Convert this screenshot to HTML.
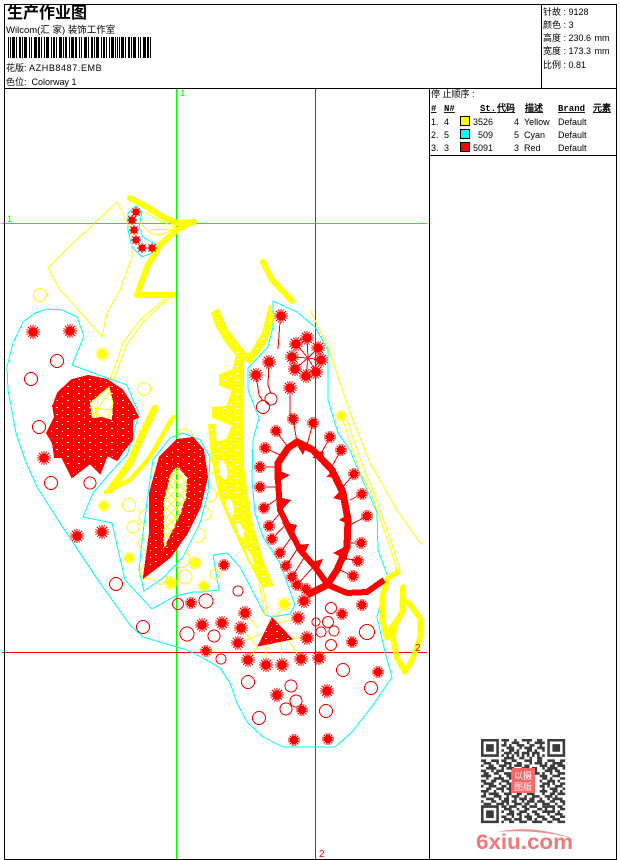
<!DOCTYPE html>
<html><head><meta charset="utf-8"><title>生产作业图</title>
<style>
html,body{margin:0;padding:0;background:#fff;width:620px;height:860px;overflow:hidden}
svg{position:absolute;left:0;top:0;display:block}
text{font-family:"Liberation Sans","WenQuanYi Zen Hei","Noto Sans CJK SC",sans-serif;font-size:9px;fill:#000}
.m{font-family:"Liberation Mono","WenQuanYi Zen Hei",monospace;font-weight:bold;text-decoration:underline}
.c{fill:none;stroke:#0ff;stroke-width:1}
.y{fill:none;stroke:#ff0;stroke-width:1}
.yt{fill:none;stroke:#ff0;stroke-linejoin:round;stroke-linecap:round}
.r{fill:none;stroke:#f00;stroke-width:1}
.o circle{fill:none;stroke:#f00;stroke-width:1}
.oy circle{fill:none;stroke:#ff0;stroke-width:1}
</style></head><body>
<svg width="620" height="860" viewBox="0 0 620 860" shape-rendering="crispEdges">
<defs>
<g id="s" stroke="currentColor" fill="currentColor" stroke-width="1"><circle r="4"/><path d="M-7 0H7M0-7V7M-5-5L5 5M-5 5L5-5M-6.5-2.5L6.5 2.5M-6.5 2.5L6.5-2.5M-2.5-6.5L2.5 6.5M2.5-6.5L-2.5 6.5"/></g>
<g id="t" stroke="currentColor" fill="currentColor" stroke-width="1"><circle r="3.4"/><path d="M-6 0H6M0-6V6M-4.3-4.3L4.3 4.3M-4.3 4.3L4.3-4.3M-5.6-2.2L5.6 2.2M-5.6 2.2L5.6-2.2M-2.2-5.6L2.2 5.6M2.2-5.6L-2.2 5.6"/></g>
<g id="u" stroke="currentColor" fill="currentColor" stroke-width="1"><circle r="3"/><path d="M-5 0H5M0-5V5M-3.6-3.6L3.6 3.6M-3.6 3.6L3.6-3.6"/></g>
<pattern id="rp" width="11" height="7" patternUnits="userSpaceOnUse"><rect width="11" height="7" fill="#f00"/><rect x="1" y="1" width="2" height="1" fill="#fff"/><rect x="7" y="4" width="1" height="1" fill="#fff"/></pattern>
<pattern id="yp" width="13" height="7" patternUnits="userSpaceOnUse"><rect width="13" height="7" fill="#ff0"/><rect x="2" y="2" width="3" height="1" fill="#fff"/><rect x="9" y="5" width="2" height="1" fill="#fff"/></pattern>
<pattern id="lat" width="9" height="9" patternUnits="userSpaceOnUse"><path d="M0 0L9 9M9 0L0 9" stroke="#ff0" stroke-width="1" fill="none"/></pattern>
</defs>

<!-- guide lines -->
<path d="M2 223.5H427" stroke="#0f0" stroke-width="1"/>
<rect x="176" y="88" width="1.6" height="771" fill="#0f0"/>
<path d="M315.5 88V859" stroke="#f00" stroke-width="1"/>
<path d="M2 652.5H427" stroke="#f00" stroke-width="1"/>

<!-- cyan outlines -->
<polygon class="c" points="72,365 84,336 77,317 62,310 47,309 35,313 23,322 13,343 7,367 8,390 10,400 16,433 25,460 37,487 60,523 80,553 100,583 130,625 143,637 163,643 187,650 203,658 220,668 230,683 237,703 247,722 263,737 283,747 335,747 352,732 373,705 392,677 385,652 377,617 388,577 378,550 377,512 367,490 358,470 350,450 338,433 328,400 328,350 315,327 297,312 273,301 273,327 268,347 248,368 248,390 259,418 253,440 252,480 255,513 263,537 280,563 295,605 290,614 272,617 265,615 240,567 227,553 213,555 219,590 200,592 193,592 175,596 152,609 125,580 112,523 83,517 93,493 110,473 127,455 132,440 139,413 133,400 127,385 107,378"/>
<polygon class="c" points="136,206 142,212 139,227 143,237 157,245 152,253 142,257 132,247 128,230 128,213"/>
<polygon class="c" points="144,591 139,570 143,533 149,487 153,460 170,438 183,433 200,440 210,457 208,493 200,523 183,557 163,578"/>

<!-- yellow thin -->
<polygon class="y" points="117,202 95,223 73,243 48,268 60,290 83,315 102,337 107,313 120,290 132,257 131,230"/>
<path class="y" d="M167 297L140 320L123 343L110 380M171 296L143 322L126 346L113 382"/>
<path class="y" d="M145 212Q160 222 176 227M140 222Q155 245 176 226M150 230Q165 228 176 232"/>
<path class="y" d="M310 310L328 347L340 383L353 420L370 463L380 480L397 510L413 533L422 545"/>
<path class="y" d="M347 420L363 467L373 490L393 547L400 570M343 420L360 473L370 490L390 547L397 570"/>
<path class="y" d="M262 583L268 615M259 583L265 615"/>
<path class="y" d="M272 618L290 604M258 628L245 613M262 634L238 643M256 645L241 628M272 625L298 618M285 638L307 638M258 646L248 660M266 640V665M281 640L282 665M288 640L301 659"/>
<path class="y" d="M150 470a6 6 0 0 1 0 12M146 510a7 7 0 0 0 0 14M146 536a7 7 0 0 0 0 14M144 564a7 7 0 0 0 8 14M207 460a6 6 0 0 1 2 14M211 488a6 6 0 0 1-3 14M206 508a6 6 0 0 1-2 12M200 528a7 7 0 0 1-4 14M186 552a7 7 0 0 1-10 14M166 576a6 6 0 0 1-12 4M178 436a6 6 0 0 1 14 0"/>

<!-- yellow thick -->
<path class="yt" stroke-width="6" d="M130 198L147 207L163 217L177 223L194 222"/>
<path class="yt" stroke-width="6" d="M192 222L177 230L160 245L147 267L137 295L173 295"/>
<path class="yt" stroke-width="6" d="M263 262L272 280L292 301"/>
<path class="yt" stroke-width="7" d="M155 408L143 433L130 463L110 490"/>
<path class="yt" stroke-width="4.5" d="M173 417L150 457L130 480L106 492"/>
<polygon fill="url(#yp)" stroke="#ff0" stroke-width="2" points="212,313 218,310 227,330 245,353 250,355 263,333 270,305 273,320 265,343 250,363 243,358 243,377 242,417 243,467 250,517 262,560 272,585 263,587 247,557 233,527 220,497 212,457 209,425 214,425 216,443 227,440 233,425 213,417 213,408 227,407 233,390 220,385 220,375 233,370 237,355 227,343 217,327"/>
<g fill="#fff"><ellipse cx="223" cy="470" rx="4" ry="10" transform="rotate(-12 223 470)"/><ellipse cx="230" cy="507" rx="3.5" ry="9" transform="rotate(-15 230 507)"/><ellipse cx="240" cy="530" rx="3" ry="8" transform="rotate(-20 240 530)"/><ellipse cx="250" cy="557" rx="1.5" ry="9" transform="rotate(-25 250 557)"/></g>
<path class="yt" stroke-width="5.5" d="M398 572L388 578L382 598L382 618L387 638L392 627L402 613L403 587"/>
<path class="yt" stroke-width="5.5" d="M408 602L420 618L420 638L413 658L405 672L397 658L393 638L395 625L402 613"/>

<!-- yellow circles / stars -->
<g class="oy"><circle cx="40" cy="295" r="6.5"/><circle cx="144" cy="389" r="6.5"/><circle cx="129" cy="505" r="6.5"/><circle cx="133" cy="527" r="6"/><circle cx="185" cy="577" r="7"/><circle cx="215" cy="574" r="5"/></g>
<g color="#ff0"><use href="#s" x="102" y="354"/><use href="#t" x="104" y="506"/><use href="#t" x="129" y="558"/><use href="#s" x="195" y="563"/><use href="#s" x="171" y="583"/><use href="#t" x="204" y="586"/><use href="#t" x="341" y="416"/><use href="#s" x="284" y="604"/></g>

<!-- red fan -->
<polygon fill="url(#rp)" stroke="#f00" stroke-width="2" points="53,407 58,393 72,380 88,376 107,380 122,390 133,407 138,417 132,420 132,440 122,452 117,460 107,455 100,473 90,463 72,477 62,457 55,457 53,443 47,433 55,417 53,405"/>
<polygon fill="#fff" points="90,403 109,387 113,403 112,420 102,417 92,418"/>
<path class="y" d="M90 403L109 387L113 403L108 418M98 396L96 418M90 408L112 410M92 418L109 392M90 412L103 417"/>

<!-- red leaf -->
<path fill="url(#rp)" stroke="#f00" stroke-width="2" fill-rule="evenodd" d="M144 577L150 533L150 493L160 457L177 440L193 438L203 450L207 477L200 507L187 533L170 557ZM177 465L170 473L163 500L163 552L180 517L187 497L188 477Z"/>
<polygon fill="url(#lat)" points="177,465 170,473 163,500 163,552 180,517 187,497 188,477"/>

<!-- ring -->
<path d="M278 480L278 463L288 448L297 442L313 450L332 470L343 493L348 520L347 547L337 570L327 585L307 595" fill="none" stroke="#f00" stroke-width="7"/>
<path d="M278 480L280 510L290 530L300 550L315 567L328 585L347 593L367 592L384 580" fill="none" stroke="#f00" stroke-width="6"/>
<g fill="#f00"><polygon points="277,470 290,475 278,482"/><polygon points="277,497 291,500 280,512"/><polygon points="282,522 297,525 291,540"/><polygon points="295,545 309,544 303,557"/><polygon points="308,563 323,559 317,573"/><polygon points="333,498 345,487 348,502"/><polygon points="339,520 350,513 350,525"/><polygon points="333,553 348,545 347,560"/><polygon points="326,477 333,470 340,478"/><polygon points="298,447 308,442 303,455"/><polygon points="312,458 323,450 324,458"/></g>
<polygon fill="url(#rp)" stroke="#f00" points="272,618 258,646 292,639"/>

<!-- red spokes -->
<path class="r" d="M280 322L278 349M308 358L307 338M308 358L296 344M308 358L318 348M308 358L292 357M308 358L321 360M308 358L316 372M308 358L306 376M308 358L295 369M269 362L268 385L271 394M256 375L259 395L263 401M290 388L290 415L293 419L297 442M313 423L307 445M276 431L290 450M265 448L280 455M260 467H278M260 487H278M264 508L280 497M269 526L281 512M272 539L288 522M280 553L293 535M286 566L300 545M292 577L307 553M297 585L315 565M330 437L322 452M341 450L330 470M354 474L340 490M362 494L350 500M367 516L350 525M361 543H347M358 561L343 558M353 576L340 570"/>

<!-- red circles -->
<g class="o"><circle cx="57" cy="361" r="6.5"/><circle cx="31" cy="379" r="6.5"/><circle cx="39" cy="427" r="6.5"/><circle cx="51" cy="483" r="6.5"/><circle cx="90" cy="483" r="6"/><circle cx="116" cy="584" r="6.5"/><circle cx="143" cy="627" r="6.5"/><circle cx="178" cy="604" r="5.5"/><circle cx="206" cy="601" r="7"/><circle cx="187" cy="634" r="7"/><circle cx="214" cy="636" r="6"/><circle cx="221" cy="659" r="5"/><circle cx="238" cy="591" r="5"/><circle cx="248" cy="682" r="6.5"/><circle cx="291" cy="686" r="6"/><circle cx="296" cy="701" r="6"/><circle cx="286" cy="709" r="6"/><circle cx="326" cy="711" r="6.5"/><circle cx="259" cy="718" r="6.5"/><circle cx="343" cy="670" r="6.5"/><circle cx="371" cy="688" r="6.5"/><circle cx="367" cy="632" r="7.5"/><circle cx="331" cy="645" r="5.5"/><circle cx="334" cy="631" r="5"/><circle cx="321" cy="632" r="5"/><circle cx="328" cy="622" r="5.5"/><circle cx="316" cy="622" r="4"/><circle cx="331" cy="608" r="5.5"/><circle cx="271" cy="399" r="6"/><circle cx="263" cy="407" r="6.5"/></g>

<!-- red stars -->
<g color="#f00">
<use href="#u" x="136" y="212"/><use href="#u" x="132" y="220"/><use href="#u" x="134" y="230"/><use href="#u" x="136" y="240"/><use href="#u" x="142" y="248"/><use href="#u" x="152" y="248"/>
<use href="#s" x="33" y="332"/><use href="#s" x="70" y="331"/><use href="#s" x="44" y="458"/><use href="#s" x="77" y="536"/><use href="#s" x="102" y="532"/><use href="#t" x="191" y="603"/><use href="#s" x="202" y="625"/>
<use href="#s" x="281" y="316"/><use href="#s" x="307" y="338"/><use href="#s" x="296" y="344"/><use href="#s" x="318" y="348"/><use href="#s" x="292" y="357"/><use href="#s" x="321" y="360"/><use href="#s" x="316" y="372"/><use href="#s" x="306" y="376"/><use href="#s" x="295" y="369"/>
<use href="#s" x="269" y="362"/><use href="#s" x="256" y="375"/><use href="#s" x="290" y="388"/><use href="#t" x="293" y="419"/><use href="#t" x="313" y="423"/><use href="#t" x="276" y="431"/><use href="#t" x="265" y="448"/><use href="#t" x="260" y="467"/><use href="#t" x="330" y="437"/><use href="#t" x="341" y="450"/><use href="#t" x="354" y="474"/>
<use href="#t" x="260" y="487"/><use href="#t" x="264" y="508"/><use href="#t" x="269" y="526"/><use href="#t" x="272" y="539"/><use href="#t" x="280" y="553"/><use href="#t" x="286" y="566"/><use href="#t" x="292" y="577"/><use href="#t" x="297" y="585"/><use href="#t" x="306" y="589"/><use href="#s" x="304" y="601"/>
<use href="#t" x="362" y="494"/><use href="#t" x="367" y="516"/><use href="#t" x="361" y="543"/><use href="#t" x="358" y="561"/><use href="#t" x="353" y="576"/><use href="#t" x="362" y="605"/><use href="#t" x="342" y="614"/><use href="#t" x="224" y="565"/>
<use href="#s" x="245" y="613"/><use href="#s" x="241" y="628"/><use href="#s" x="238" y="643"/><use href="#s" x="222" y="623"/><use href="#t" x="206" y="651"/><use href="#s" x="298" y="618"/><use href="#s" x="307" y="638"/><use href="#s" x="248" y="660"/><use href="#s" x="266" y="665"/><use href="#s" x="282" y="665"/><use href="#s" x="301" y="659"/><use href="#s" x="319" y="658"/><use href="#t" x="352" y="642"/><use href="#t" x="378" y="672"/><use href="#s" x="327" y="691"/><use href="#s" x="277" y="695"/><use href="#t" x="302" y="710"/><use href="#t" x="294" y="740"/><use href="#t" x="328" y="739"/>
</g>

<text x="180" y="96" style="font-size:9px;fill:#0f0">1</text>
<text x="7" y="222" style="font-size:9px;fill:#0f0">1</text>
<text x="415" y="651" style="font-size:10px;fill:#f00">2</text>
<text x="319" y="857" style="font-size:10px;fill:#f00">2</text>

<!-- frame -->
<g stroke="#000" stroke-width="1" fill="none">
<rect x="4.5" y="4.5" width="612" height="855"/>
<path d="M4 88.5H617M541.5 4V88M429.5 88V860M430 155.5H617"/>
</g>

<!-- header text -->
<text x="7" y="18" style="font-size:16px;font-weight:bold">生产作业图</text>
<text x="6" y="33" style="font-size:9.5px">Wilcom(汇 家) 装饰工作室</text>
<path d="M8 47.5H151" stroke="#000" stroke-width="21" stroke-dasharray="1 1 1 1 3 1 1 2 2 1 1 1 3 2 1 1 1 2 3 1 2 1 1 2 1 1 3 2 1 1 2 1 1 2 3 1 1 1 2 2 1 1 3 1 2 2 1 1 1 2 3 1 1 2 2 1 1 1 3 2 1 1 2 1 1 2 1 1 3 1 1 1"/>
<text x="6" y="71" style="font-size:9px">花版: <tspan letter-spacing=".6">AZHB8487.EMB</tspan></text>
<text x="6" y="85" style="font-size:9px">色位: &#160;Colorway 1</text>

<text x="543" y="15">针故 : 9128</text>
<text x="543" y="28">颜色 : 3</text>
<text x="543" y="41">高度 : 230.6 <tspan dx="1">mm</tspan></text>
<text x="543" y="54">宽度 : 173.3 <tspan dx="1">mm</tspan></text>
<text x="543" y="68">比例 : 0.81</text>

<text x="431" y="97">停 止顺序 :</text>
<text class="m" x="431" y="111">#</text><text class="m" x="444" y="111">N#</text><text class="m" x="480" y="111">St.</text>
<text class="m" x="497" y="111">代码</text><text class="m" x="525" y="111">描述</text><text class="m" x="558" y="111">Brand</text><text class="m" x="593" y="111">元素</text>

<g stroke="#000"><rect x="460.5" y="116.5" width="9" height="9" fill="#ff0"/><rect x="460.5" y="129.5" width="9" height="9" fill="#0ff"/><rect x="460.5" y="142.5" width="9" height="9" fill="#f00"/></g>
<text x="431" y="125">1.</text><text x="444" y="125">4</text><text x="473" y="125">3526</text><text x="514" y="125">4</text><text x="524" y="125">Yellow</text><text x="558" y="125">Default</text>
<text x="431" y="138">2.</text><text x="444" y="138">5</text><text x="478" y="138">509</text><text x="514" y="138">5</text><text x="524" y="138">Cyan</text><text x="558" y="138">Default</text>
<text x="431" y="151">3.</text><text x="444" y="151">3</text><text x="473" y="151">5091</text><text x="514" y="151">3</text><text x="524" y="151">Red</text><text x="558" y="151">Default</text>

<!-- QR -->
<g shape-rendering="auto" transform="translate(481 739) scale(2.55)" fill="none" stroke="#3c3c3c" stroke-width="1">
<path d="M.5.5h6v6h-6zM26.5.5h6v6h-6zM.5 26.5h6v6h-6z"/>
<path d="M2 2h3v3H2zM28 2h3v3h-3zM2 28h3v3H2z" fill="#3c3c3c" stroke="none"/>
<path d="M8 .5h3M13 .5h1M16 .5h4M22 .5h2M9 1.5h1M12 1.5h3M18 1.5h1M21 1.5h4M8 2.5h2M11 2.5h1M14 2.5h3M19 2.5h2M23 2.5h1M10 3.5h3M15 3.5h1M17 3.5h3M22 3.5h3M8 4.5h1M11 4.5h2M14 4.5h1M18 4.5h2M21 4.5h1M24 4.5h1M9 5.5h3M13 5.5h2M16 5.5h3M20 5.5h3M8 6.5h1M10 6.5h1M12 6.5h1M14 6.5h1M16 6.5h1M18 6.5h1M20 6.5h1M22 6.5h1M24 6.5h1M9 7.5h4M15 7.5h2M19 7.5h1M22 7.5h2"/>
<path d="M0 8.5h2M4 8.5h3M8 8.5h2M12 8.5h2M17 8.5h3M22 8.5h2M26 8.5h3M31 8.5h2M1 9.5h3M6 9.5h1M9 9.5h3M14 9.5h2M19 9.5h1M21 9.5h3M25 9.5h1M28 9.5h4M0 10.5h1M3 10.5h2M7 10.5h3M11 10.5h1M13 10.5h3M17 10.5h2M23 10.5h3M27 10.5h2M30 10.5h3M2 11.5h4M8 11.5h1M10 11.5h3M16 11.5h3M20 11.5h2M24 11.5h1M26 11.5h4M32 11.5h1M0 12.5h2M4 12.5h1M6 12.5h3M12 12.5h2M15 12.5h1M19 12.5h3M25 12.5h3M29 12.5h2M1 13.5h2M5 13.5h2M9 13.5h3M21 13.5h2M24 13.5h1M27 13.5h1M30 13.5h3M0 14.5h4M7 14.5h1M10 14.5h2M23 14.5h3M28 14.5h3M2 15.5h1M5 15.5h4M11 15.5h1M24 15.5h2M27 15.5h1M31 15.5h2M0 16.5h2M4 16.5h2M8 16.5h3M23 16.5h1M26 16.5h3M30 16.5h1M1 17.5h4M7 17.5h1M10 17.5h2M24 17.5h3M28 17.5h1M31 17.5h2M0 18.5h1M3 18.5h3M8 18.5h2M11 18.5h1M23 18.5h2M26 18.5h1M29 18.5h3M2 19.5h2M6 19.5h3M10 19.5h2M24 19.5h1M27 19.5h3M32 19.5h1M0 20.5h3M5 20.5h1M8 20.5h1M11 20.5h1M23 20.5h3M28 20.5h2M31 20.5h1M1 21.5h1M3 21.5h4M9 21.5h3M14 21.5h2M18 21.5h3M24 21.5h1M27 21.5h2M30 21.5h3M0 22.5h2M5 22.5h3M10 22.5h1M12 22.5h3M17 22.5h1M20 22.5h3M25 22.5h3M29 22.5h1M2 23.5h3M7 23.5h1M9 23.5h2M13 23.5h1M15 23.5h3M19 23.5h2M23 23.5h1M26 23.5h1M28 23.5h4M0 24.5h1M4 24.5h2M8 24.5h3M12 24.5h2M16 24.5h1M18 24.5h3M22 24.5h3M27 24.5h2M31 24.5h2M1 25.5h3M6 25.5h3M10 25.5h1M13 25.5h3M17 25.5h2M21 25.5h1M24 25.5h3M29 25.5h1M32 25.5h1"/>
<path d="M8 26.5h2M11 26.5h3M16 26.5h2M19 26.5h3M24 26.5h5M30 26.5h2M9 27.5h3M14 27.5h1M17 27.5h2M22 27.5h2M25 27.5h1M28 27.5h1M31 27.5h2M8 28.5h1M11 28.5h2M15 28.5h3M20 28.5h2M24 28.5h5M30 28.5h1M10 29.5h3M14 29.5h2M18 29.5h1M21 29.5h2M26 29.5h1M29 29.5h3M8 30.5h2M12 30.5h1M15 30.5h1M17 30.5h3M22 30.5h3M27 30.5h2M31 30.5h2M9 31.5h3M13 31.5h3M18 31.5h2M21 31.5h1M24 31.5h2M28 31.5h3M8 32.5h1M11 32.5h2M15 32.5h3M20 32.5h4M26 32.5h2M30 32.5h3"/>
</g>
<rect x="512" y="768" width="23" height="25" fill="#f66"/>
<text x="514" y="779" style="font-size:9px;fill:#fff">以摄</text>
<text x="514" y="790" style="font-size:9px;fill:#fff">图版</text>

<!-- 6xiu logo -->
<path shape-rendering="auto" d="M498 832Q530 824 572 838Q535 829 498 832Z" fill="#ee9090"/>
<text x="476" y="849" style="font-size:21px;font-weight:bold;fill:#f07878" textLength="97" lengthAdjust="spacingAndGlyphs">6xiu.com</text>
</svg>
</body></html>
